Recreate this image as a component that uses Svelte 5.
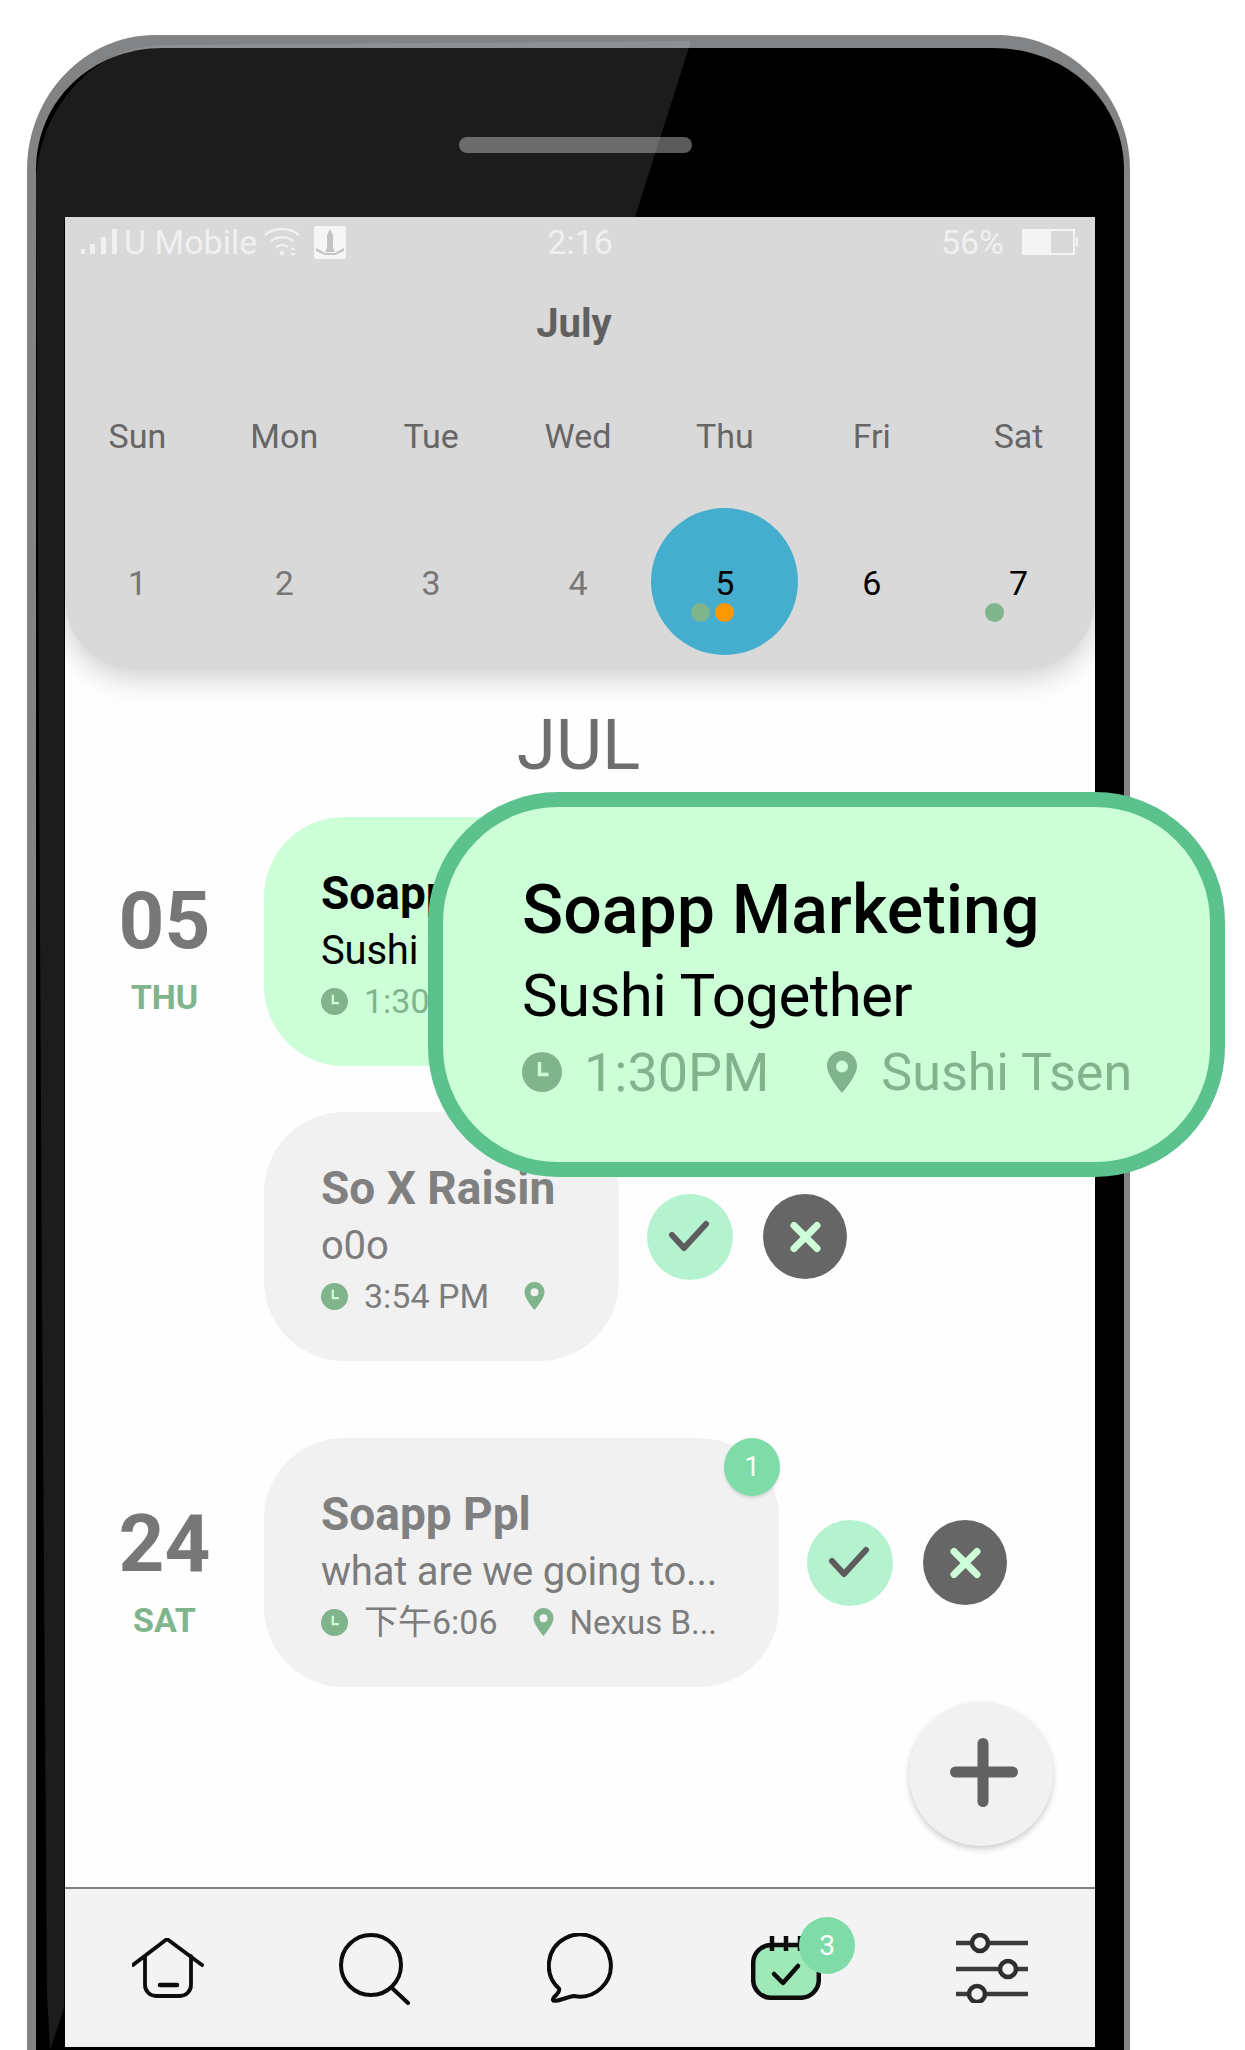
<script>
  const weekdays = ['Sun', 'Mon', 'Tue', 'Wed', 'Thu', 'Fri', 'Sat'];
  const dates = [
    { n: 1 }, { n: 2 }, { n: 3 }, { n: 4 },
    { n: 5, dark: true, active: true, dots: ['green', 'orange'] },
    { n: 6, dark: true },
    { n: 7, dark: true, dots: ['green'] }
  ];
</script>

{#snippet clock(cls)}
  <svg class={cls} viewBox="0 0 40 40" aria-hidden="true">
    <circle cx="20" cy="20" r="20" fill="#7fb48c" />
    <path d="M17.5 10v12.5h9" fill="none" stroke="#ccfed8" stroke-width="3.4" />
  </svg>
{/snippet}

{#snippet pin(cls)}
  <svg class={cls} viewBox="0 0 30 42" aria-hidden="true">
    <path fill-rule="evenodd" fill="#7fb48c" d="M15 0C6.700 0 0 6.700 0 15c0 10 15 27 15 27s15-17 15-27C30 6.700 23.300 0 15 0zm0 9.500a6 6 0 1 1 0 12 6 6 0 0 1 0-12z" />
  </svg>
{/snippet}

{#snippet actions()}
  <div class="actions">
    <button class="btn ok" aria-label="Accept">
      <svg viewBox="0 0 86 86"><path d="M25 41l12 13 22-24" fill="none" stroke="#5d5d5d" stroke-width="6" stroke-linecap="round" stroke-linejoin="round" /></svg>
    </button>
    <button class="btn no" aria-label="Decline">
      <svg viewBox="0 0 84 84"><path d="M31 31l23 23M54 31L31 54" fill="none" stroke="#ccfed8" stroke-width="7" stroke-linecap="round" /></svg>
    </button>
  </div>
{/snippet}

<div class="phone">
  <svg class="frame" viewBox="0 0 1245 2050" aria-hidden="true">
    <path fill="#828384" d="M27 2050V170C27 95 85 35 155 35H997C1070 35 1130 95 1130 170V2050Z" />
    <path fill="#000" d="M36 2050V170C36 100 92 48 163 48H993C1065 48 1124 100 1124 170V2050Z" />
    <rect x="459" y="137" width="233" height="16" rx="8" fill="#5a5a5a" />
    <path fill="#fff" fill-opacity="0.11" d="M36 180C40 110 90 46 165 45L691 41L635 217H64V2008L50 2050L47 1994L42 1300Z" />
  </svg>

  <main class="screen">
    <header class="calendar">
      <div class="status">
        <div class="st-left">
          <svg class="signal" viewBox="0 0 36 26"><path fill="#f1f1f1" d="M0 20h4v5H0zM9 15h5v10H9zM20 8h5v17h-5zM31 0h5v25h-5z" /></svg>
          <span class="carrier">U Mobile</span>
          <svg class="wifi" viewBox="0 0 36 30" fill="none" stroke="#f1f1f1" stroke-width="2.400">
            <path d="M1 8C10 0 26 0 35 8M7 14C13 9 23 9 29 14M12 20c4-3 8-3 12 0" />
            <circle cx="18" cy="26" r="2.300" fill="#f1f1f1" stroke="none" />
            <path d="M29 20l3 3h-6zM29 29l3-3h-6z" fill="#f1f1f1" stroke="none" />
          </svg>
          <svg class="notif" viewBox="0 0 32 33">
            <rect width="32" height="33" rx="2" fill="#f6f6f6" />
            <path fill="#c4c4c4" d="M16 3l3 6v13l2 4H11l2-4V9zM2 22l9 5h10l9-5v3l-9 4H11l-9-4z" />
          </svg>
        </div>
        <span class="st-time">2:16</span>
        <div class="st-right">
          <span class="pct">56%</span>
          <span class="battery"><i></i></span>
        </div>
      </div>
      <h2 class="month">July</h2>
      <div class="week">
        {#each weekdays as d}<span>{d}</span>{/each}
      </div>
      <div class="days">
        {#each dates as d}
          <div class="day" class:dark={d.dark}>
            {#if d.active}<span class="today"></span>{/if}
            <span class="num">{d.n}</span>
            {#if d.dots}
              <span class="dots">
                {#each d.dots as c}<i class={c}></i>{/each}
              </span>
            {/if}
          </div>
        {/each}
      </div>
    </header>

    <section class="list">
      <h1 class="jul">JUL</h1>

      <div class="group g1">
        <div class="date">
          <div class="dnum">05</div>
          <div class="dname">THU</div>
        </div>
        <div class="rows">
          <div class="row">
            <article class="card mint w1">
              <div class="title">Soapp Marketing</div>
              <div class="sub">Sushi Together</div>
              <div class="meta">
                {@render clock('ic')}
                <span class="tm">1:30PM</span>
              </div>
            </article>
          </div>
          <div class="row r2">
            <article class="card grey w1">
              <div class="title">So X Raisin</div>
              <div class="sub">o0o</div>
              <div class="meta">
                {@render clock('ic')}
                <span class="tm">3:54 PM</span>
                {@render pin('pn')}
              </div>
            </article>
            {@render actions()}
          </div>
        </div>
      </div>

      <div class="group g2">
        <div class="date">
          <div class="dnum">24</div>
          <div class="dname">SAT</div>
        </div>
        <div class="rows">
          <div class="row">
            <article class="card grey w2">
              <div class="title">Soapp Ppl</div>
              <div class="sub">what are we going to...</div>
              <div class="meta">
                {@render clock('ic')}
                <span class="tm">下午6:06</span>
                {@render pin('pn')}
                <span class="loc">Nexus B...</span>
              </div>
              <span class="cbadge">1</span>
            </article>
            {@render actions()}
          </div>
        </div>
      </div>

      <button class="fab" aria-label="Add">
        <svg viewBox="0 0 144 144"><path d="M74 41.500V99.500M46.500 70H103.500" fill="none" stroke="#616161" stroke-width="11" stroke-linecap="round" /></svg>
      </button>
    </section>

    <nav class="tabs">
      <svg class="t home" viewBox="0 0 72 60" fill="none" stroke="#0c0c0c" stroke-width="3.800" stroke-linecap="round" stroke-linejoin="round">
        <path d="M1 27L35 1l35 26M13 18v29a11 11 0 0 0 11 11h24a11 11 0 0 0 11-11V18" />
        <path d="M28 47h17" stroke-width="4.500" />
      </svg>
      <svg class="t search" viewBox="0 0 72 72" fill="none" stroke="#0c0c0c" stroke-width="4" stroke-linecap="round">
        <circle cx="32" cy="32" r="30" />
        <path d="M53 55l16 15" />
      </svg>
      <svg class="t chat" viewBox="0 0 70 72" fill="none" stroke="#0c0c0c" stroke-width="4" stroke-linejoin="round">
        <path d="M27 63A31 31 0 1 0 12 55.500C14 60 5 64 6 67C7 70 20 64 27 63Z" />
      </svg>
      <div class="t calwrap">
        <svg viewBox="0 0 70 64" fill="none" stroke="#0c0c0c" stroke-width="4.500">
          <rect x="2.200" y="9" width="65.600" height="52.800" rx="18" fill="#9fe8b8" />
          <path d="M21 0v15M35 0v15M49 0v15" />
          <path d="M23 38l9 9 15-17" stroke-linecap="round" stroke-linejoin="round" />
        </svg>
        <span class="tbadge">3</span>
      </div>
      <svg class="t sliders" viewBox="0 0 72 70" fill="none" stroke="#2e2e2e" stroke-width="4.500">
        <path d="M0 10h72M0 36h72M0 61h72" stroke="#3c3c3c" />
        <circle cx="24" cy="10" r="8" fill="#f3f3f3" />
        <circle cx="52" cy="36" r="8" fill="#f3f3f3" />
        <circle cx="21" cy="61" r="8" fill="#f3f3f3" />
      </svg>
    </nav>
  </main>

  <aside class="popup">
    <div class="p-title">Soapp Marketing</div>
    <div class="p-sub">Sushi Together</div>
    <div class="p-meta">
      {@render clock('p-ic')}
      <span class="p-tm">1:30PM</span>
      {@render pin('p-pn')}
      <span>Sushi Tsen</span>
    </div>
  </aside>
</div>

<style>
  :global(body) {
    margin: 0;
    background: #fff;
    font-family: Roboto, "Noto Sans CJK SC", sans-serif;
  }
  .phone {
    position: relative;
    width: 1245px;
    height: 2050px;
    overflow: hidden;
    padding: 217px 0 0 65px;
    box-sizing: border-box;
  }
  .frame {
    position: absolute;
    left: 0;
    top: 0;
    width: 1245px;
    height: 2050px;
  }
  .screen {
    position: relative;
    width: 1030px;
    height: 1830px;
    background: #fefefe;
    overflow: hidden;
    display: flex;
    flex-direction: column;
  }
  .calendar {
    position: relative;
    z-index: 1;
    height: 452px;
    flex: none;
    box-sizing: border-box;
    background: #d9d9d9;
    border-radius: 0 0 70px 70px;
    box-shadow: 0 8px 30px rgba(0, 0, 0, 0.2);
  }
  .status {
    height: 50px;
    padding: 0 16px 18px;
    display: grid;
    grid-template-columns: 1fr auto 1fr;
    align-items: center;
    color: #f0f0f0;
    font-size: 34px;
  }
  .st-left { display: flex; align-items: center; }
  .signal { width: 36px; height: 26px; }
  .carrier { margin-left: 7px; }
  .wifi { width: 36px; height: 30px; margin-left: 7px; }
  .notif { width: 32px; height: 33px; margin-left: 14px; }
  .st-right { display: flex; justify-content: flex-end; align-items: center; }
  .battery {
    width: 53px;
    height: 26px;
    margin: 0 4px 0 18px;
    box-sizing: border-box;
    border: 2px solid #f4f4f4;
    position: relative;
  }
  .battery i {
    display: block;
    width: 27px;
    height: 100%;
    background: #f4f4f4;
  }
  .battery::after {
    content: "";
    position: absolute;
    right: -5px;
    top: 6px;
    width: 2px;
    height: 10px;
    background: #f4f4f4;
  }
  .month {
    margin: 14px 0 0;
    height: 50px;
    line-height: 50px;
    padding-right: 12px;
    text-align: center;
    font-size: 40px;
    font-weight: 700;
    color: #606060;
  }
  .week, .days {
    display: grid;
    grid-template-columns: repeat(7, 1fr);
    width: 1028px;
    margin-left: -1px;
    text-align: center;
  }
  .week {
    margin-top: 62px;
    line-height: 50px;
    font-size: 34px;
    color: #666;
  }
  .days { margin-top: 47px; }
  .day {
    position: relative;
    height: 147px;
    display: flex;
    align-items: center;
    justify-content: center;
    font-size: 34px;
    color: #777;
  }
  .day.dark { color: #000; }
  .today {
    position: absolute;
    left: 50%;
    top: 0;
    width: 147px;
    height: 147px;
    margin-left: -73.500px;
    border-radius: 50%;
    background: #45aecf;
  }
  .num { position: relative; margin-top: 2px; }
  .dots {
    position: absolute;
    left: 50%;
    top: 95px;
    margin-left: -33.500px;
    display: flex;
    gap: 5px;
  }
  .dots i {
    width: 19px;
    height: 19px;
    border-radius: 50%;
  }
  .green { background: #7fb48c; }
  .orange { background: #ff9800; }

  .list {
    position: relative;
    flex: 1;
    min-height: 0;
  }
  .jul {
    margin: 34px 0 0;
    height: 84px;
    line-height: 84px;
    padding-right: 3px;
    text-align: center;
    font-size: 71px;
    font-weight: 400;
    color: #6e6e6e;
  }
  .group { display: flex; }
  .g1 { margin-top: 30px; }
  .g2 { margin-top: 77px; }
  .date {
    width: 199px;
    flex: none;
    padding-top: 62px;
    text-align: center;
  }
  .g2 .date { padding-top: 64px; }
  .dnum {
    line-height: 84px;
    font-size: 80px;
    font-weight: 700;
    color: #777;
  }
  .dname {
    margin-top: 12px;
    line-height: 44px;
    font-size: 34px;
    font-weight: 700;
    color: #7fb48c;
  }
  .rows { display: flex; flex-direction: column; gap: 46px; }
  .row { display: flex; align-items: center; }
  .card {
    position: relative;
    height: 249px;
    box-sizing: border-box;
    padding: 49px 0 0 57px;
    border-radius: 80px;
    color: #7c7c7c;
  }
  .w1 { width: 355px; }
  .w2 { width: 515px; }
  .mint { background: #ccfed8; color: #000; }
  .grey { background: #f1f1f1; }
  .title {
    line-height: 54px;
    font-size: 46px;
    font-weight: 700;
    white-space: nowrap;
  }
  .grey .title { color: #808080; }
  .sub {
    margin-top: 6px;
    line-height: 50px;
    font-size: 40px;
    letter-spacing: -0.2px;
    white-space: nowrap;
  }
  .meta {
    margin-top: 3px;
    height: 44px;
    display: flex;
    align-items: center;
    font-size: 34px;
    line-height: 1;
    white-space: nowrap;
  }
  .mint .meta { color: #7fb48c; }
  .ic { width: 27px; height: 27px; flex: none; }
  .tm { margin-left: 16px; }
  .pn { width: 21px; height: 28px; flex: none; margin-left: 35px; }
  .loc { margin-left: 16px; font-size: 33px; }
  .cbadge {
    position: absolute;
    right: -1px;
    top: 0;
    width: 56px;
    height: 58px;
    border-radius: 50%;
    background: #7fdca8;
    color: #f4fff8;
    font-size: 28px;
    line-height: 58px;
    text-align: center;
    box-shadow: 0 2px 3px rgba(0, 0, 0, 0.12);
  }
  .actions {
    display: flex;
    gap: 30px;
    margin-left: 28px;
  }
  .btn {
    padding: 0;
    border: 0;
    border-radius: 50%;
    display: block;
  }
  .btn svg { display: block; width: 100%; height: 100%; }
  .ok { width: 86px; height: 86px; background: #b5f2d0; }
  .no { width: 84px; height: 85px; background: #666; }
  .fab {
    position: absolute;
    left: 844px;
    top: 1033px;
    width: 144px;
    height: 144px;
    padding: 0;
    border: 0;
    border-radius: 50%;
    background: #f1f1f1;
    box-shadow: 0 3px 6px rgba(0, 0, 0, 0.2);
  }
  .fab svg { display: block; width: 100%; height: 100%; }

  .tabs {
    position: relative;
    z-index: 2;
    height: 158px;
    flex: none;
    background: #f3f3f3;
    border-top: 2px solid #808080;
    display: grid;
    grid-template-columns: 207px 208px 204px 205px 1fr;
    align-items: center;
    padding-left: 67px;
  }
  .t { display: block; }
  .home { width: 72px; height: 60px; }
  .search { width: 72px; height: 72px; margin-top: 2px; }
  .chat { width: 70px; height: 72px; margin-top: 2px; }
  .sliders { width: 72px; height: 70px; }
  .calwrap { position: relative; width: 70px; height: 64px; }
  .calwrap svg { display: block; width: 70px; height: 64px; }
  .tbadge {
    position: absolute;
    left: 48px;
    top: -19px;
    width: 56px;
    height: 57px;
    border-radius: 50%;
    background: #7fdca8;
    color: #fff;
    font-size: 28px;
    line-height: 57px;
    text-align: center;
  }

  .popup {
    position: absolute;
    left: 428px;
    top: 792px;
    width: 797px;
    height: 385px;
    box-sizing: border-box;
    padding: 63px 0 0 79px;
    background: #ccfed8;
    border: 15px solid #5bc18d;
    border-radius: 130px;
    color: #000;
  }
  .p-title {
    line-height: 80px;
    font-size: 68px;
    font-weight: 500;
    white-space: nowrap;
  }
  .p-sub {
    margin-top: 11px;
    line-height: 70px;
    font-size: 60px;
    letter-spacing: -0.6px;
    white-space: nowrap;
  }
  .p-meta {
    margin-top: 11px;
    height: 60px;
    display: flex;
    align-items: center;
    font-size: 52px;
    color: #7fb48c;
    white-space: nowrap;
  }
  .p-ic { width: 40px; height: 40px; flex: none; }
  .p-tm { margin-left: 22px; font-size: 54px; }
  .p-pn { width: 30px; height: 42px; flex: none; margin-left: 58px; margin-right: 24px; }
</style>
